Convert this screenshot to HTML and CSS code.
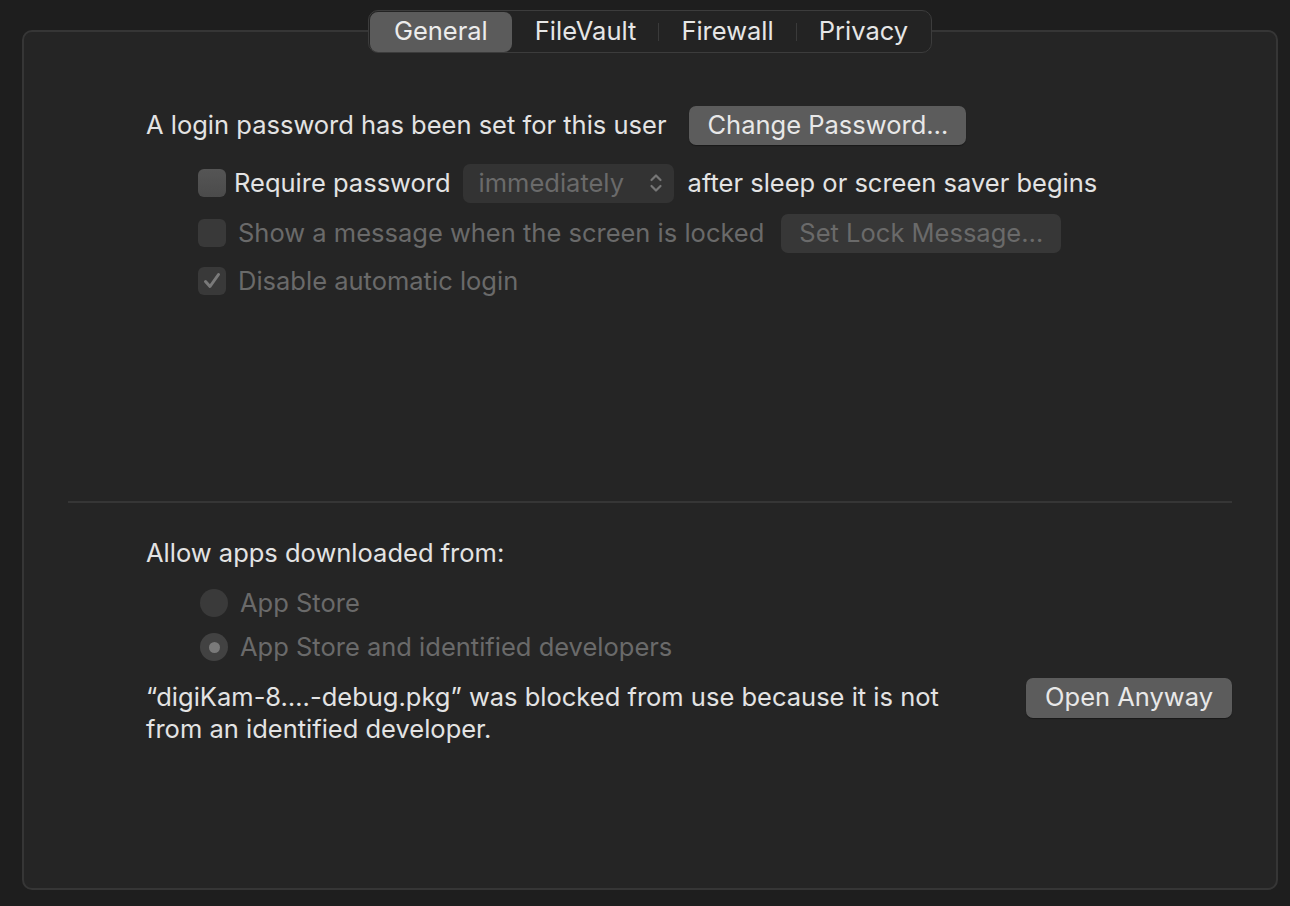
FILE: index.html
```html
<!DOCTYPE html>
<html>
<head>
<meta charset="utf-8">
<link rel="stylesheet" href="styles.css">
</head>
<body>
<div class="panel">
  <div class="tabs">
    <div class="tab selected">General</div>
    <div class="tab">FileVault</div>
    <div class="sep"></div>
    <div class="tab">Firewall</div>
    <div class="sep"></div>
    <div class="tab">Privacy</div>
  </div>

  <div class="section top">
    <div class="row r1">
      <span class="label">A login password has been set for this user</span>
      <button class="btn">Change Password…</button>
    </div>
    <div class="row r2 indent">
      <span class="check"></span>
      <span class="label">Require password</span>
      <span class="popup"><span>immediately</span>
        <svg class="chev" width="14" height="24" viewBox="0 0 14 24"><path d="M2.5 9 L7 4.5 L11.5 9 M2.5 15 L7 19.5 L11.5 15" fill="none" stroke="#767676" stroke-width="2.2" stroke-linecap="round" stroke-linejoin="round"/></svg>
      </span>
      <span class="label">after sleep or screen saver begins</span>
    </div>
    <div class="row r3 indent">
      <span class="check off"></span>
      <span class="label dim">Show a message when the screen is locked</span>
      <button class="btn off">Set Lock Message…</button>
    </div>
    <div class="row r4 indent">
      <span class="check off checked">
        <svg width="28" height="28" viewBox="0 0 28 28"><path d="M7.5 14.5 L12 19.5 L20.5 7.5" fill="none" stroke="#7a7a7a" stroke-width="3" stroke-linecap="round" stroke-linejoin="round"/></svg>
      </span>
      <span class="label dim">Disable automatic login</span>
    </div>
  </div>

  <div class="divider"></div>

  <div class="section bottom">
    <div class="row r5">
      <span class="label">Allow apps downloaded from:</span>
    </div>
    <div class="row r6 indent2">
      <span class="radio"></span>
      <span class="label dim">App Store</span>
    </div>
    <div class="row r7 indent2">
      <span class="radio on"><span class="dot"></span></span>
      <span class="label dim">App Store and identified developers</span>
    </div>
    <div class="blocked">
      <p class="msg">“digiKam-8….-debug.pkg” was blocked from use because it is not<br>from an identified developer.</p>
      <button class="btn open">Open Anyway</button>
    </div>
  </div>
</div>
</body>
</html>
```
FILE: styles.css
```css
html, body {
  margin: 0;
  padding: 0;
  background: #1e1e1e;
}
body {
  width: 1290px;
  height: 906px;
  overflow: hidden;
  font-family: Inter, "Liberation Sans", sans-serif;
  font-size: 25.5px;
  color: #e3e3e3;
}
.panel {
  box-sizing: border-box;
  margin: 30px 0 0 22px;
  width: 1256px;
  height: 860px;
  border: 2px solid #363636;
  border-radius: 10px;
  background: #252525;
  padding: 0 44px;
  display: flex;
  flex-direction: column;
}
.tabs {
  align-self: center;
  margin-top: -22px;
  height: 43px;
  box-sizing: border-box;
  border: 1.5px solid #3c3c3c;
  border-radius: 10px;
  background: #232323;
  display: flex;
  align-items: center;
  padding: 0 1px;
}
.tab {
  height: 40px;
  line-height: 38px;
  padding: 0 22px;
  color: #e6e6e6;
}
.tab.selected {
  background: #5b5b5b;
  border-radius: 8px;
  padding: 0 24px 0 24px;
  margin-right: 1px;
  color: #ececec;
}
.sep {
  width: 1px;
  height: 18px;
  background: #3a3a3a;
}
.section {
  padding-left: 78px;
  display: flex;
  flex-direction: column;
}
.section.top { margin-top: 52px; }
.row {
  height: 40px;
  display: flex;
  align-items: center;
  white-space: nowrap;
  line-height: 38px;
}
.r2 { margin-top: 18px; }
.r3 { margin-top: 10px; }
.r4 { margin-top: 8px; }
.indent { padding-left: 52px; }
.indent2 { padding-left: 54px; }
.label { color: #e3e3e3; }
.label.dim { color: #6a6a6a; }
.r1 .btn { margin-left: 23px; }
.r2 .check { margin-right: 8px; }
.r2 .popup { margin: 0 14px 0 12px; }
.r3 .check, .r4 .check { margin-right: 12px; }
.r3 .btn { margin-left: 17px; }
.btn {
  font-family: inherit;
  font-size: 25.5px;
  height: 39px;
  padding: 0 18px;
  border: none;
  border-radius: 7px;
  background: #5c5c5c;
  color: #e8e8e8;
  line-height: 38px;
  box-shadow: 0 1px 1px rgba(0,0,0,0.35);
}
.btn.off {
  background: #373737;
  color: #6a6a6a;
  box-shadow: none;
}
.check {
  width: 28px;
  height: 28px;
  border-radius: 6px;
  background: linear-gradient(#555555, #4b4b4b);
  flex: none;
  display: flex;
}
.check.off { background: #393939; }
.popup {
  box-sizing: border-box;
  width: 211px;
  height: 39px;
  border-radius: 7px;
  background: #333333;
  color: #6a6a6a;
  display: flex;
  align-items: center;
  justify-content: space-between;
  padding: 0 11px 0 16px;
}
.chev { display: block; }
.divider {
  margin-top: 200px;
  height: 2px;
  background: #363636;
}
.r5 { margin-top: 30px; }
.r6 { margin-top: 10px; }
.r7 { margin-top: 4px; }
.radio {
  width: 28px;
  height: 28px;
  border-radius: 50%;
  background: #3a3a3a;
  margin-right: 12px;
  flex: none;
  display: flex;
  align-items: center;
  justify-content: center;
}
.radio.on { background: #424242; }
.dot {
  width: 11px;
  height: 11px;
  border-radius: 50%;
  background: #7a7a7a;
}
.blocked {
  margin-top: 11px;
  display: flex;
  justify-content: space-between;
  align-items: flex-start;
}
.msg {
  margin: 3px 0 0 0;
  line-height: 32px;
  color: #e3e3e3;
}
.btn.open {
  height: 40px;
  line-height: 36px;
  padding: 0 19px 2px;
}
```
